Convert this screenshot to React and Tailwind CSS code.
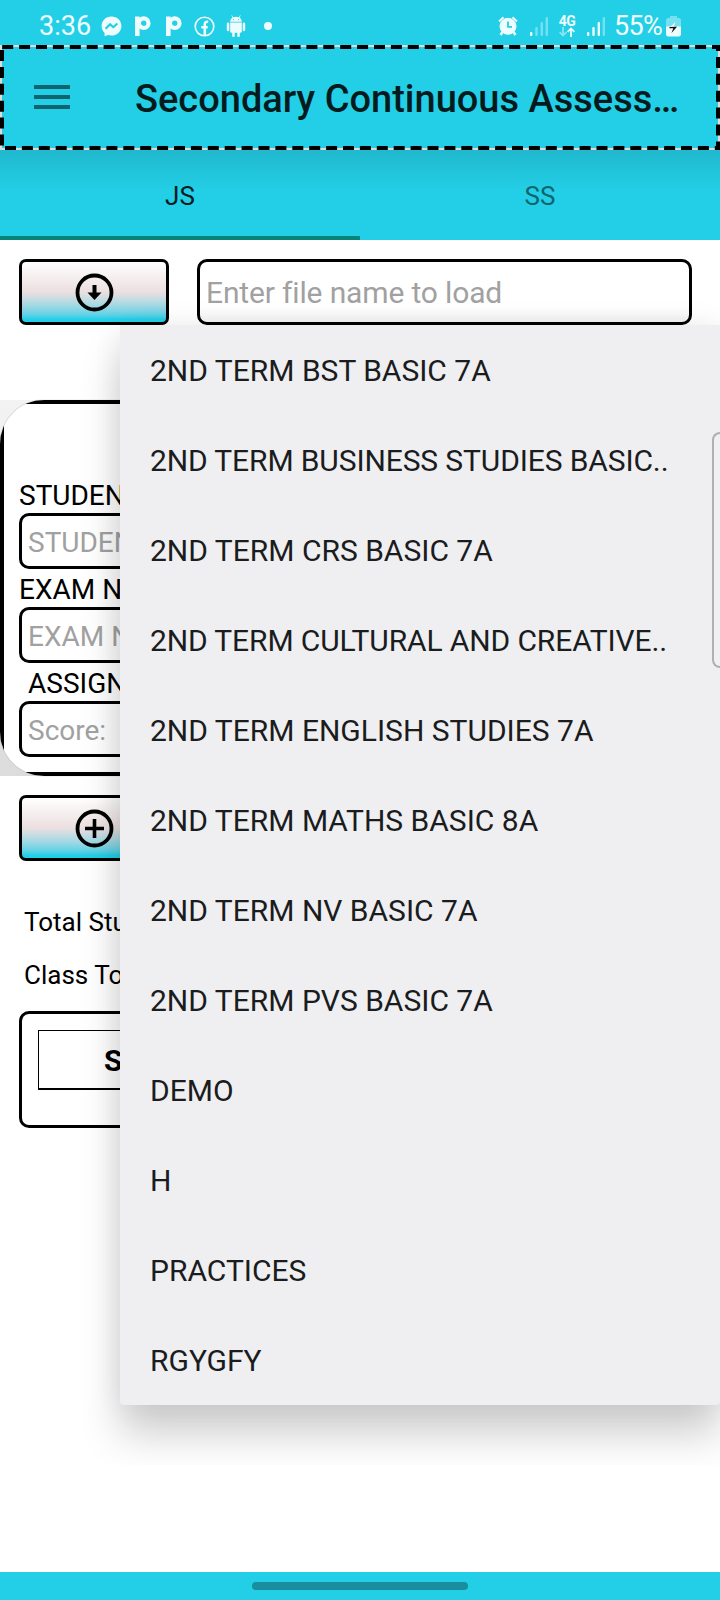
const items = [
  "2ND TERM BST BASIC 7A",
  "2ND TERM BUSINESS STUDIES BASIC..",
  "2ND TERM CRS BASIC 7A",
  "2ND TERM CULTURAL AND CREATIVE..",
  "2ND TERM ENGLISH STUDIES 7A",
  "2ND TERM MATHS BASIC 8A",
  "2ND TERM NV BASIC 7A",
  "2ND TERM PVS BASIC 7A",
  "DEMO",
  "H",
  "PRACTICES",
  "RGYGFY",
];

function LetterP({ className }) {
  return (
    <svg className={className} width="16" height="20" viewBox="0 0 16 20" fill="none">
      <path d="M2.300 20V0.500" stroke="#effcfe" strokeWidth="4.600" />
      <circle cx="8.700" cy="7.200" r="4.800" stroke="#effcfe" strokeWidth="4.200" />
    </svg>
  );
}

function Signal({ level, className }) {
  return (
    <svg className={className} width="18" height="20" viewBox="0 0 18 20" fill="#effcfe">
      <rect x="0" y="15" width="2.4" height="4" rx="1" />
      <rect x="5.3" y="10" width="2.4" height="9" rx="1" opacity={level > 1 ? 1 : 0.4} />
      <rect x="10.6" y="5" width="2.4" height="14" rx="1" opacity={level > 2 ? 1 : 0.4} />
      <rect x="15.6" y="0" width="2.4" height="19" rx="1" opacity="0.4" />
    </svg>
  );
}

function StatusBar() {
  return (
    <div className="flex h-[45px] shrink-0 items-start pl-[39px] pt-3 text-[#effcfe]">
      <span className="mt-[-1px] w-[51px] whitespace-nowrap text-[27px] leading-[30px]">3:36</span>
      <svg className="ml-[11px] mt-1" width="21" height="21" viewBox="0 0 21 21">
        <path d="M10.500 0.500C4.800 .5.6 4.700.6 10c0 2.800 1.100 5.200 3 6.900v3.400l3.300-1.200c1.100.3 2.300.5 3.600.5 5.700 0 9.900-4.200 9.900-9.600S16.200.5 10.500.5z" fill="#effcfe" />
        <path d="M4.600 12.700l4.500-4.500 3.200 3 4-3.700" stroke="#23cfe6" strokeWidth="2.200" fill="none" strokeLinejoin="round" />
      </svg>
      <LetterP className="ml-[13px] mt-1" />
      <LetterP className="ml-[15px] mt-1" />
      <svg className="ml-[12px] mt-1" width="21" height="21" viewBox="0 0 21 21" fill="none" stroke="#effcfe">
        <circle cx="10.500" cy="10.500" r="9.300" strokeWidth="1.600" />
        <path d="M10.800 19.500V8.500c0-2 1-3 3.400-2.700M7.300 11.300h6.400" strokeWidth="2.600" />
      </svg>
      <svg className="ml-[11px] mt-[3px]" width="20" height="22" viewBox="0 0 20 22" fill="#effcfe">
        <path d="M4.200 6.800C4.200 4.800 5.200 3.400 6.600 2.600L5.300.6l.6-.4 1.400 2.100c1.700-.7 3.700-.7 5.400 0L14.100.2l.6.4-1.300 2c1.400.8 2.400 2.200 2.400 4.200z" />
        <path d="M4.200 7.600h11.600v9c0 .7-.5 1.200-1.200 1.200h-.8v3.100c0 1.400-2.500 1.400-2.500 0v-3.100H8.700v3.100c0 1.400-2.500 1.400-2.500 0v-3.100h-.8c-.7 0-1.200-.5-1.200-1.200z" />
        <rect x="0.800" y="7.600" width="2.500" height="8.600" rx="1.250" />
        <rect x="16.700" y="7.600" width="2.500" height="8.600" rx="1.250" />
        <circle cx="7.500" cy="4.600" r=".6" fill="#23cfe6" />
        <circle cx="12.500" cy="4.600" r=".6" fill="#23cfe6" />
      </svg>
      <span className="ml-[18px] mt-[10px] size-2 rounded-full bg-[#effcfe]" />
      <svg className="ml-[226px] mt-1" width="20" height="20" viewBox="0 0 20 20" fill="none" stroke="#effcfe">
        <circle cx="10" cy="10.300" r="8" fill="#effcfe" />
        <path d="M1 5.500L5.500 1.300M19 5.500L14.500 1.300" strokeWidth="2" />
        <path d="M4.500 16L2.500 19M15.500 16l2 3" strokeWidth="2.500" />
        <path d="M10 5.500v5.300h4" stroke="#23cfe6" strokeWidth="1.800" />
      </svg>
      <Signal level={1} className="ml-[12px] mt-[5px]" />
      <div className="ml-[10px] mt-[3px] flex w-[18px] flex-col items-center">
        <span className="text-[14px] font-bold leading-[12px] tracking-[-0.5px]">4G</span>
        <svg width="16" height="10" viewBox="0 0 16 10" fill="none" stroke="#effcfe" strokeWidth="1.800">
          <path d="M4 0v9M.6 5.200L4 8.600l3.400-3.400" opacity=".5" />
          <path d="M12 10V1.500M8.600 4.800L12 1.400l3.400 3.400" />
        </svg>
      </div>
      <Signal level={3} className="ml-[11px] mt-[5px]" />
      <span className="ml-[9px] mt-[-1px] w-[49px] whitespace-nowrap text-[27px] leading-[30px] tracking-[-0.7px]">55%</span>
      <svg className="ml-[3px] mt-1" width="15" height="21" viewBox="0 0 15 21">
        <path d="M4 0h7v2h2.500l1.500 1.500V11H0V3.500L1.500 2H4z" fill="#effcfe" opacity=".4" />
        <path d="M0 10.500h15V19l-1.500 1.500h-12L0 19z" fill="#effcfe" />
        <path d="M9.500 6L3.500 11.500h4z" fill="#effcfe" />
        <path d="M3.500 11l7.500-.2L5.500 17l1.800-4.800H3.500z" fill="#111" />
      </svg>
    </div>
  );
}

function Header() {
  return (
    <header className="relative flex h-[105px] shrink-0 items-center pl-[31px]">
      <svg className="absolute inset-0" width="720" height="105" fill="none">
        <rect x="1" y="1" width="718" height="103" stroke="#dcdcdc" strokeWidth="2" />
        <path d="M2 2H720" stroke="#000" strokeWidth="4" strokeDasharray="11 5.9" strokeDashoffset="-0.2" />
        <path d="M5 103H718" stroke="#000" strokeWidth="4" strokeDasharray="11 5.9" />
        <path d="M2 5V103" stroke="#000" strokeWidth="4" strokeDasharray="11 5.900" />
        <path d="M718 0V105" stroke="#000" strokeWidth="4" strokeDasharray="11 5.900" strokeDashoffset="5" />
      </svg>
      <svg className="ml-[3px] mt-[-1px]" width="36" height="24" fill="#0f6470">
        <rect width="36" height="4" />
        <rect y="10" width="36" height="4" />
        <rect y="20" width="36" height="4" />
      </svg>
      <h1 className="ml-[65px] mt-[3px] whitespace-nowrap text-[38px] font-medium leading-[46px] text-[#041b1e]">Secondary Continuous Assess…</h1>
    </header>
  );
}

function Tabs() {
  return (
    <nav className="grid h-[90px] shrink-0 grid-cols-2 bg-linear-to-b from-[#20b8ce] to-[#23cfe6] to-45% text-center text-[26px] leading-[92px]">
      <div className="h-[90px] border-b-4 border-[#05857a] text-[#041b1e]">JS</div>
      <div className="text-[#0f6470]">SS</div>
    </nav>
  );
}

function IconButton({ children }) {
  return (
    <div className="h-[66px] w-[150px] shrink-0 rounded-[7px] border-3 border-black bg-linear-to-b from-white via-[#ecdfe0] to-[#23cfe6] to-95% pl-[53px] pt-[11px]">
      <svg width="40" height="40" viewBox="0 0 40 40" fill="none" stroke="#000">
        <circle cx="19.500" cy="19.500" r="17" strokeWidth="3.800" />
        {children}
      </svg>
    </div>
  );
}

function Field({ label, hint, indent }) {
  return (
    <div className="flex flex-col whitespace-nowrap text-[28px]">
      <div className={indent ? "h-[38px] pl-[9px] leading-[41px]" : "h-[38px] leading-[41px]"}>{label}</div>
      <div className="h-14 rounded-[10px] border-3 border-black pl-[6px] leading-[53px] text-[#a1a1a1]">{hint}</div>
    </div>
  );
}

function FileMenu() {
  return (
    <div className="absolute left-[60px] top-[300px] h-[1165px] w-[660px] overflow-hidden pl-[60px] pt-[25px]">
      <ul className="relative h-[1080px] rounded-b-[4px] bg-[#efeff1] shadow-[0_30px_40px_rgba(0,0,0,0.19),0_0_30px_rgba(0,0,0,0.07)]">
        {items.map((name) => (
          <li
            key={name}
            className={
              name.endsWith("..")
                ? "h-[90px] whitespace-nowrap pl-[30px] text-[30px] leading-[92px] tracking-[-0.12px] text-[#1a1c1e]"
                : "h-[90px] whitespace-nowrap pl-[30px] text-[30px] leading-[92px] text-[#1a1c1e]"
            }
          >
            {name}
          </li>
        ))}
        <li className="absolute right-0 top-[107px] h-[236px] w-[8px] rounded-l-[8px] border-2 border-r-0 border-[#b0b0b0] bg-[#f0f0f2]" />
      </ul>
    </div>
  );
}

export default function App() {
  return (
    <div className="relative flex h-[1600px] w-[720px] flex-col overflow-hidden bg-[#23cfe6] font-[Roboto,sans-serif] text-black">
      <StatusBar />
      <Header />
      <Tabs />
      <main className="flex h-[1332px] shrink-0 flex-col bg-white pt-[19px]">
        <div className="flex gap-7 pl-[19px]">
          <IconButton>
            <path d="M19.500 12v9" strokeWidth="4" />
            <path d="M12.500 19.500h14l-7 7.500z" fill="#000" stroke="none" />
          </IconButton>
          <div className="h-[66px] w-[495px] rounded-[10px] border-3 border-black bg-linear-to-b from-white from-75% to-[#f3f3f3] pl-[6px] text-[30px] leading-[62px] tracking-[-0.15px] text-[#a1a1a1]">Enter file name to load</div>
        </div>
        <div className="mt-[75px] h-[376px] shrink-0 bg-linear-to-b from-[#f3f3f3] to-[#dcdcdc]">
          <div className="h-[376px] overflow-hidden rounded-[44px] bg-white shadow-[0_0_1px_#888]">
            <div className="h-[376px] border-4 border-black pl-[15px] pr-6 pt-[71px]">
              <Field label="STUDENT" hint="STUDENT" />
              <Field label="EXAM NO" hint="EXAM NO" />
              <Field label="ASSIGN" hint="Score:" indent />
            </div>
          </div>
        </div>
        <div className="mt-[19px] pl-[19px]">
          <IconButton>
            <path d="M19.500 10v19M10 19.500h19" strokeWidth="3.600" />
          </IconButton>
        </div>
        <div className="mt-[44px] pl-6 text-[26px] leading-[34px]">Total Stu</div>
        <div className="mt-[19px] pl-6 text-[26px] leading-[34px]">Class Tot</div>
        <div className="ml-[19px] mr-7 mt-[19px] h-[117px] shrink-0 rounded-[10px] border-3 border-black px-4 pt-4">
          <div className="h-[60px] border border-b-2 border-black pl-[65px] text-[30px] font-bold leading-[59px]">S/N</div>
        </div>
      </main>
      <footer className="flex h-7 shrink-0 justify-center pt-[10px]">
        <div className="h-2 w-[216px] rounded-full bg-[#188e9e]" />
      </footer>
      <FileMenu />
    </div>
  );
}
